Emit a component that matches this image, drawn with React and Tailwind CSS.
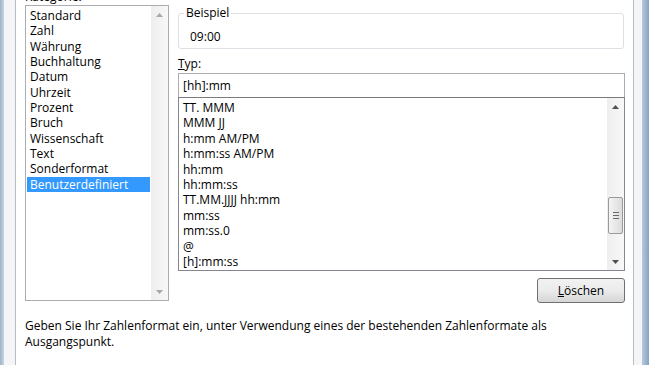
import React from 'react';

const categories = [
  'Standard',
  'Zahl',
  'Währung',
  'Buchhaltung',
  'Datum',
  'Uhrzeit',
  'Prozent',
  'Bruch',
  'Wissenschaft',
  'Text',
  'Sonderformat',
  'Benutzerdefiniert',
];

const formats = [
  'TT. MMM',
  'MMM JJ',
  'h:mm AM/PM',
  'h:mm:ss AM/PM',
  'hh:mm',
  'hh:mm:ss',
  'TT.MM.JJJJ hh:mm',
  'mm:ss',
  'mm:ss.0',
  '@',
  '[h]:mm:ss',
];

function ArrowUp({ color = '#4d4d4d' }) {
  return (
    <svg width="7" height="4" viewBox="0 0 7 4">
      <path d="M0 4 L3.5 0 L7 4 Z" fill={color} />
    </svg>
  );
}

function ArrowDown({ color = '#4d4d4d' }) {
  return (
    <svg width="7" height="4" viewBox="0 0 7 4">
      <path d="M0 0 L7 0 L3.5 4 Z" fill={color} />
    </svg>
  );
}

/**
 * Scrollbar im Stil von Windows 7
 */
function Scrollbar({ thumb, disabled }) {
  return (
    <div className="w-[17px] shrink-0 flex flex-col bg-gradient-to-r from-[#eeeeee] to-[#f8f8f8]">
      <div className="h-[17px] flex items-center justify-center">
        <ArrowUp color={disabled ? '#a8a8a8' : '#505050'} />
      </div>
      <div className="flex-1 flex flex-col px-[1px]">
        {thumb && (
          <>
            <div style={{ height: thumb.top }} />
            <div
              className="rounded-[2px] border border-[#9a9a9a] bg-gradient-to-r from-[#f4f4f4] to-[#dcdcdc] flex flex-col items-center justify-center gap-[2px]"
              style={{ height: thumb.height }}
            >
              <div className="w-[6px] h-[1px] bg-[#6a6a6a]" />
              <div className="w-[6px] h-[1px] bg-[#6a6a6a]" />
              <div className="w-[6px] h-[1px] bg-[#6a6a6a]" />
            </div>
          </>
        )}
      </div>
      <div className="h-[17px] flex items-center justify-center">
        <ArrowDown color={disabled ? '#a8a8a8' : '#505050'} />
      </div>
    </div>
  );
}

export default function App() {
  return (
    <div
      className="w-[649px] h-[365px] overflow-hidden flex bg-white text-[12px] text-black"
      style={{ fontFamily: '"Segoe UI", "Open Sans", "Noto Sans", sans-serif' }}
    >
      {/* linker Fensterrahmen */}
      <div className="w-[4px] shrink-0 bg-gradient-to-r from-[#9fb3c9] to-[#c9d6e3]" />
      <div className="w-[11px] shrink-0 bg-[#f3f5f7]" />
      <div className="w-[1px] shrink-0 bg-[#b9bcc0]" />

      {/* Registerkarte */}
      <div className="flex-1 flex flex-col bg-white pl-[9px] pr-[8px]">
        <div className="h-[15px] -mt-[11px] leading-[15px]">Kategorie:</div>

        <div className="flex gap-[9px] mt-[1px]">
          {/* Kategorie-Liste */}
          <div className="w-[144px] h-[296px] shrink-0 border border-[#abadb3] flex">
            <div className="flex-1 pt-[2px] pl-[1px] pr-[1px] leading-[15.35px]">
              {categories.map((c) => (
                <div
                  key={c}
                  className={`px-[3px] whitespace-nowrap ${
                    c === 'Benutzerdefiniert' ? 'bg-[#3399ff] text-white' : ''
                  }`}
                >
                  {c}
                </div>
              ))}
            </div>
            <Scrollbar disabled />
          </div>

          {/* rechte Spalte */}
          <div className="flex-1 flex flex-col">
            {/* Beispiel */}
            <div className="mt-[8px] h-[36px] mr-[1px] rounded-[3px] border border-[#dcdfe3] relative">
              <span className="absolute -top-[9px] left-[5px] px-[2px] bg-white leading-[15px]">
                Beispiel
              </span>
              <div className="pl-[11px] pt-[15px] leading-[15px]">09:00</div>
            </div>

            <div className="mt-[7px] leading-[15px]">
              <span className="underline">T</span>yp:
            </div>

            {/* Eingabefeld */}
            <div className="mt-[2px] h-[24px] border border-[#abadb3] border-b-0 flex items-center pl-[4px]">
              [hh]:mm
            </div>

            {/* Format-Liste */}
            <div className="h-[174px] border border-[#828790] border-t-[#7a7a7a] flex">
              <div className="flex-1 pt-[2px] pl-[4px] leading-[15.4px]">
                {formats.map((f) => (
                  <div key={f} className="whitespace-nowrap">
                    {f}
                  </div>
                ))}
              </div>
              <Scrollbar thumb={{ top: 82, height: 37 }} />
            </div>

            <div className="flex justify-end mt-[7px]">
              <button className="w-[88px] h-[25px] rounded-[3px] border border-[#707070] bg-gradient-to-b from-[#f2f2f2] via-[#ebebeb] to-[#d6d6d6] text-[12px]">
                <span className="underline">L</span>öschen
              </button>
            </div>
          </div>
        </div>

        <p className="mt-[15px] leading-[15.5px] w-[600px]">
          Geben Sie Ihr Zahlenformat ein, unter Verwendung eines der bestehenden Zahlenformate als
          Ausgangspunkt.
        </p>
      </div>

      {/* rechter Fensterrahmen */}
      <div className="w-[1px] shrink-0 bg-[#b9bcc0]" />
      <div className="w-[8px] shrink-0 bg-[#f3f5f7]" />
      <div className="w-[8px] shrink-0 bg-gradient-to-r from-[#b7c9dc] to-[#7f9dc0]" />
    </div>
  );
}
